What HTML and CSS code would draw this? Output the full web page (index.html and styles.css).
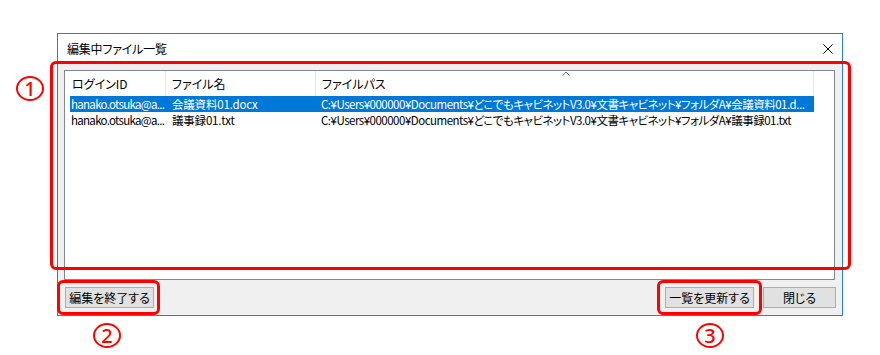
FILE: index.html
```html
<!DOCTYPE html>
<html lang="ja">
<head>
    <meta charset="UTF-8">
    <title>編集中ファイル一覧</title>
    <link rel="stylesheet" href="styles.css">
</head>
<body>

    <!-- Dialog window -->
    <div class="dialog">
        <div class="titlebar">
            <span class="title">編集中ファイル一覧</span>
            <svg class="close" width="10" height="10" viewBox="0 0 10 10">
                <path d="M0.5 0.5 L9.5 9.5 M9.5 0.5 L0.5 9.5" stroke="#000" stroke-width="1" fill="none"/>
            </svg>
        </div>

        <div class="client">
            <!-- File list -->
            <div class="listview">
                <div class="lv-header">
                    <div class="hcol c1">ログインID</div>
                    <div class="hcol c2">ファイル名</div>
                    <div class="hcol c3">ファイルパス
                        <svg class="sort" width="8" height="5" viewBox="0 0 8 5">
                            <path d="M0.5 4.5 L4 1 L7.5 4.5" stroke="#6d6d6d" stroke-width="1" fill="none"/>
                        </svg>
                    </div>
                </div>
                <div class="lv-row selected">
                    <div class="col c1">hanako.otsuka@a...</div>
                    <div class="col c2">会議資料01.docx</div>
                    <div class="col c3">C:¥Users¥000000¥Documents¥どこでもキャビネットV3.0¥文書キャビネット¥フォルダA¥会議資料01.d...</div>
                </div>
                <div class="lv-row">
                    <div class="col c1">hanako.otsuka@a...</div>
                    <div class="col c2">議事録01.txt</div>
                    <div class="col c3">C:¥Users¥000000¥Documents¥どこでもキャビネットV3.0¥文書キャビネット¥フォルダA¥議事録01.txt</div>
                </div>
            </div>

            <!-- Buttons -->
            <div class="buttons">
                <button class="btn">編集を終了する</button>
                <span class="spacer"></span>
                <button class="btn">一覧を更新する</button>
                <button class="btn btn-small">閉じる</button>
            </div>
        </div>
    </div>

    <!-- Annotations -->
    <div class="mark mark-list"></div>
    <div class="mark mark-end"></div>
    <div class="mark mark-refresh"></div>
    <div class="num num-1">1</div>
    <div class="num num-2">2</div>
    <div class="num num-3">3</div>

</body>
</html>
```

FILE: styles.css
```css
body {
    margin: 0;
    height: 355px;
    position: relative;
    background-color: #ffffff;
    font-family: "Noto Sans CJK JP", "Noto Sans", sans-serif;
    font-size: 12px;
    font-feature-settings: "palt";
    color: #000000;
    overflow: hidden;
}
.dialog {
    margin: 33px 0 0 57px;
    width: 786px;
    height: 283px;
    box-sizing: border-box;
    border: 1px solid #2b7fd2;
    display: flex;
    flex-direction: column;
}
.titlebar {
    height: 29px;
    background-color: #ffffff;
    display: flex;
    align-items: center;
    padding: 0 9px 0 9px;
}
.title {
    flex: 1;
    letter-spacing: -0.2px;
}
.close {
    display: block;
}
.client {
    flex: 1;
    background-color: #f0f0f0;
    padding: 7px 7px 7px 6px;
    display: flex;
    flex-direction: column;
}
.listview {
    height: 210px;
    box-sizing: border-box;
    border: 1px solid #828790;
    background-color: #ffffff;
}
.lv-header {
    display: flex;
    height: 25px;
}
.hcol {
    position: relative;
    box-sizing: border-box;
    border-right: 1px solid #e5e5e5;
    padding-left: 6px;
    line-height: 25px;
    white-space: nowrap;
}
.hcol.c1 {
    width: 101px;
    padding-left: 7px;
}
.hcol.c2 {
    width: 150px;
}
.hcol.c3 {
    width: 498px;
}
.sort {
    position: absolute;
    left: 246px;
    top: 0;
}
.lv-row {
    display: flex;
    margin-left: 5px;
    width: 744px;
    height: 16px;
    line-height: 16px;
    font-size: 11.5px;
}
.lv-row.selected {
    background-color: #0078d7;
    color: #ffffff;
}
.col {
    box-sizing: border-box;
    white-space: nowrap;
    overflow: hidden;
}
.col.c1 {
    width: 95px;
    padding: 0 0 0 1px;
    letter-spacing: -0.7px;
}
.col.c2 {
    width: 150px;
    padding-left: 7px;
    letter-spacing: -0.2px;
}
.col.c3 {
    width: 499px;
    padding: 0 2px 0 6px;
    letter-spacing: -0.5px;
}
.buttons {
    display: flex;
    gap: 9px;
    margin: 7px -1px 0 1px;
}
.spacer {
    flex: 1;
}
.btn {
    width: 89px;
    height: 21px;
    box-sizing: border-box;
    padding: 0;
    background-color: #e1e1e1;
    border: 1px solid #adadad;
    font-family: inherit;
    font-size: 12px;
    font-feature-settings: "palt";
    color: #000000;
}
.btn-small {
    width: 73px;
}

/* red annotations */
.mark {
    position: absolute;
    box-sizing: border-box;
    border: 3px solid #ff0000;
    border-radius: 6px;
}
.mark-list {
    left: 50px;
    top: 61px;
    width: 801px;
    height: 209px;
}
.mark-end {
    left: 57px;
    top: 280px;
    width: 103px;
    height: 35px;
}
.mark-refresh {
    left: 657px;
    top: 280px;
    width: 105px;
    height: 35px;
}
.num {
    position: absolute;
    box-sizing: border-box;
    width: 28px;
    height: 25px;
    border: 2px solid #ff0000;
    border-radius: 50%;
    color: #ff0000;
    font-family: "Noto Sans", sans-serif;
    font-size: 20px;
    font-weight: 500;
    line-height: 21px;
    text-align: center;
}
.num-1 {
    left: 16px;
    top: 76px;
}
.num-2 {
    left: 93px;
    top: 323px;
}
.num-3 {
    left: 696px;
    top: 323px;
}
```
